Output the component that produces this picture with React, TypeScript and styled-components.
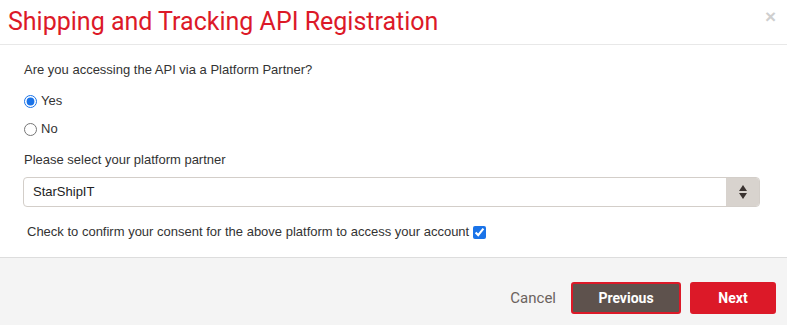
import React, { useState } from 'react';
import styled, { createGlobalStyle } from 'styled-components';

const GlobalStyle = createGlobalStyle`
  html, body {
    margin: 0;
    padding: 0;
    background: #ffffff;
  }
  body {
    font-family: "Liberation Sans", Arial, sans-serif;
    color: #333333;
  }
`;

const Modal = styled.div`
  width: 787px;
  height: 325px;
  display: flex;
  flex-direction: column;
  background: #ffffff;
  overflow: hidden;
`;

const Header = styled.div`
  height: 44px;
  display: flex;
  align-items: center;
  justify-content: space-between;
  padding: 0 11px 0 8px;
  border-bottom: 1px solid #e8e8e8;
  box-sizing: content-box;
`;

const Title = styled.h1`
  margin: 0;
  font-family: Roboto, "Liberation Sans", sans-serif;
  font-weight: 400;
  font-size: 25px;
  line-height: 30px;
  color: #dc1928;
`;

const CloseButton = styled.button`
  border: 0;
  background: none;
  padding: 0;
  margin-top: -12px;
  font-family: "Liberation Sans", Arial, sans-serif;
  font-weight: 700;
  font-size: 19px;
  line-height: 1;
  color: #cfcfcf;
  cursor: pointer;
`;

const Body = styled.div`
  flex: 1;
  display: flex;
  flex-direction: column;
  padding: 15px 27px 0 23px;
  font-size: 13px;
  line-height: 20px;
`;

const Question = styled.div`
  margin-left: 1px;
  margin-bottom: 11px;
`;

const RadioRow = styled.label<{ $gap: number }>`
  display: flex;
  align-items: center;
  gap: 4px;
  height: 20px;
  margin-left: 1px;
  margin-bottom: ${p => p.$gap}px;
`;

const Radio = styled.input`
  width: 13px;
  height: 13px;
  margin: 0;
  accent-color: #1a73e8;
`;

const FieldLabel = styled.div`
  margin-left: 1px;
  margin-bottom: 7px;
`;

const SelectBox = styled.div`
  display: flex;
  height: 30px;
  box-sizing: border-box;
  border: 1px solid #d3cec9;
  border-radius: 4px;
  overflow: hidden;
`;

const SelectValue = styled.div`
  flex: 1;
  display: flex;
  align-items: center;
  padding-left: 9px;
  color: #222222;
`;

const SelectArrow = styled.div`
  width: 33px;
  display: flex;
  align-items: center;
  justify-content: center;
  background: #d8d3ce;
`;

const ConsentRow = styled.label`
  display: flex;
  align-items: center;
  gap: 4px;
  margin: 15px 0 0 4px;
  height: 20px;
`;

const Checkbox = styled.input`
  width: 13px;
  height: 13px;
  margin: 0;
  accent-color: #1a73e8;
`;

const Footer = styled.div`
  height: 68px;
  display: flex;
  align-items: flex-start;
  justify-content: flex-end;
  gap: 9px;
  padding: 24px 11px 0 0;
  box-sizing: border-box;
  background: #f4f4f4;
  border-top: 1px solid #dddddd;
`;

const CancelLink = styled.button`
  border: 0;
  background: none;
  padding: 0;
  margin-right: 6px;
  height: 32px;
  font-family: Roboto, "Liberation Sans", sans-serif;
  font-size: 15px;
  color: #6b625e;
  cursor: pointer;
`;

const ActionButton = styled.button<{ $variant: 'dark' | 'red'; $width: number }>`
  width: ${p => p.$width}px;
  height: 32px;
  box-sizing: border-box;
  border-radius: 3px;
  border: 2px solid #dc1928;
  background: ${p => (p.$variant === 'dark' ? '#5e524d' : '#dc1928')};
  color: #ffffff;
  font-family: Roboto, "Liberation Sans", sans-serif;
  font-weight: 700;
  font-size: 14px;
  cursor: pointer;
`;

export default function App() {
  const [viaPartner, setViaPartner] = useState(true);
  const [consent, setConsent] = useState(true);

  return (
    <>
      <GlobalStyle />
      <Modal>
        <Header>
          <Title>Shipping and Tracking API Registration</Title>
          <CloseButton aria-label="Close">×</CloseButton>
        </Header>
        <Body>
          <Question>Are you accessing the API via a Platform Partner?</Question>
          <RadioRow $gap={8}>
            <Radio type="radio" name="partner" checked={viaPartner} onChange={() => setViaPartner(true)} />
            Yes
          </RadioRow>
          <RadioRow $gap={11}>
            <Radio type="radio" name="partner" checked={!viaPartner} onChange={() => setViaPartner(false)} />
            No
          </RadioRow>
          <FieldLabel>Please select your platform partner</FieldLabel>
          <SelectBox>
            <SelectValue>StarShipIT</SelectValue>
            <SelectArrow>
              <svg width="8" height="14" viewBox="0 0 8 14">
                <path d="M4 0 L8 6 H0 Z" fill="#3a3330" />
                <path d="M0 8 H8 L4 14 Z" fill="#3a3330" />
              </svg>
            </SelectArrow>
          </SelectBox>
          <ConsentRow>
            Check to confirm your consent for the above platform to access your account
            <Checkbox type="checkbox" checked={consent} onChange={e => setConsent(e.target.checked)} />
          </ConsentRow>
        </Body>
        <Footer>
          <CancelLink>Cancel</CancelLink>
          <ActionButton $variant="dark" $width={110}>Previous</ActionButton>
          <ActionButton $variant="red" $width={86}>Next</ActionButton>
        </Footer>
      </Modal>
    </>
  );
}
